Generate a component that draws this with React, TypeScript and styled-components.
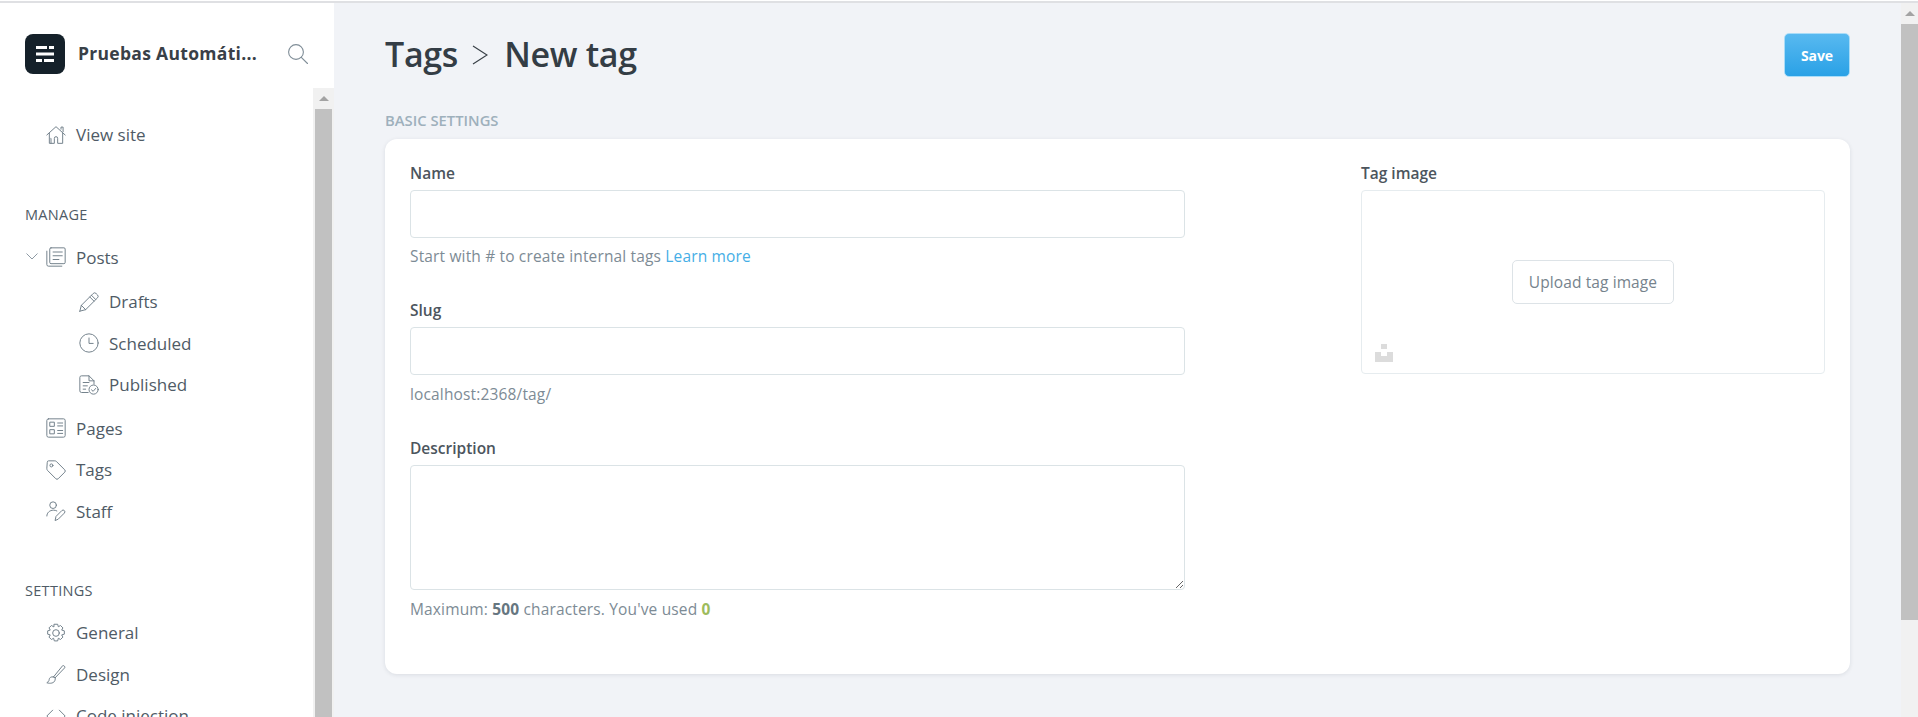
import * as React from 'react'
import styled, { createGlobalStyle } from 'styled-components'

const GlobalStyle = createGlobalStyle`
  html, body { margin: 0; padding: 0; height: 100%; overflow: hidden; }
  body { font-family: "Open Sans", "Noto Sans", sans-serif; color: #394047; }
  #root { height: 100%; }
  * { box-sizing: border-box; }
`

const Shell = styled.div`
  display: flex;
  flex-direction: column;
  height: 717px;
  background: #f1f3f7;
`

const TopLine = styled.div`
  flex: none;
  height: 3px;
  background: #fff;
  border-top: 1px solid #fff;
  border-bottom: 2px solid #dfe0e3;
`

const Body = styled.div`
  flex: 1;
  display: flex;
  min-height: 0;
`

const Sidebar = styled.aside`
  flex: none;
  width: 334px;
  display: flex;
  flex-direction: column;
  background: #fff;
`

const SideHead = styled.div`
  flex: none;
  height: 85px;
  padding: 31px 26px 0 25px;
  display: flex;
  align-items: flex-start;
`

const Logo = styled.div`
  flex: none;
  width: 40px;
  height: 40px;
  border-radius: 8px;
  background: #15212a;
  display: flex;
  align-items: center;
  justify-content: center;
`

const Brand = styled.div`
  margin-left: 13px;
  width: 210px;
  height: 38px;
  line-height: 38px;
  font-size: 17.5px;
  font-weight: 700;
  letter-spacing: 0.3px;
  color: #394047;
  white-space: nowrap;
`

const SearchWrap = styled.div`
  margin: 10px 0 0 0;
  display: flex;
`

const SideBody = styled.div`
  flex: 1;
  min-height: 0;
  display: flex;
`

const Nav = styled.nav`
  flex: 1;
  min-width: 0;
  overflow: hidden;
  padding: 26px 0 0 25px;
`

const NavRow = styled.div<{ $sub?: boolean }>`
  display: flex;
  align-items: center;
  height: 41.5px;
  padding-left: ${p => (p.$sub ? 54 : 21)}px;
  font-size: 17px;
  color: #4f5b66;
  position: relative;
`

const SubList = styled.div`
  margin: 3px 0 2px;
`

const IconSlot = styled.span`
  flex: none;
  width: 20px;
  height: 20px;
  margin-right: 10px;
  display: flex;
  color: #6f7d88;
`

const Caret = styled.span`
  position: absolute;
  left: 1px;
  top: 16px;
  display: flex;
  color: #8e9aa4;
`

const SectionTitle = styled.div<{ $top: number; $bottom: number }>`
  margin-top: ${p => p.$top}px;
  margin-bottom: ${p => p.$bottom}px;
  height: 20px;
  line-height: 20px;
  font-size: 14.5px;
  letter-spacing: 0.3px;
  color: #4f5b66;
`

const Scrollbar = styled.div<{ $inset?: boolean }>`
  flex: none;
  width: ${p => (p.$inset ? 21 : 17)}px;
  padding: ${p => (p.$inset ? '0 2px' : '0')};
  display: flex;
  flex-direction: column;
  background: #f1f1f1;
`

const ScrollUp = styled.div`
  flex: none;
  height: 21px;
  display: flex;
  align-items: center;
  justify-content: center;
  &::before {
    content: '';
    border-left: 5px solid transparent;
    border-right: 5px solid transparent;
    border-bottom: 5px solid #a3a3a3;
  }
`

const ScrollThumb = styled.div<{ $h?: number }>`
  flex: ${p => (p.$h ? 'none' : '1')};
  height: ${p => (p.$h ? `${p.$h}px` : 'auto')};
  background: #c1c1c1;
`

const Main = styled.main`
  flex: 1;
  min-width: 0;
  padding: 30px 51px 0 51px;
  background: #f1f3f7;
`

const HeaderRow = styled.div`
  display: flex;
  justify-content: space-between;
  align-items: flex-start;
  height: 75px;
`

const Title = styled.h1`
  margin: 0;
  display: flex;
  align-items: center;
  height: 42px;
  font-size: 34px;
  font-weight: 600;
  letter-spacing: -0.3px;
  color: #343d45;
`

const Crumb = styled.span`
  display: flex;
  margin: 2px 16px 0 14px;
  color: #394047;
`

const SaveButton = styled.button`
  width: 66px;
  height: 44px;
  border: 1px solid #a9dcf8;
  border-radius: 5px;
  background: linear-gradient(#58b9f0, #2aa1e6);
  color: #fff;
  font: 700 14px "Open Sans", "Noto Sans", sans-serif;
  letter-spacing: -0.1px;
  padding: 0;
`

const SectionLabel = styled.div`
  height: 31px;
  line-height: 25px;
  font-size: 14.8px;
  font-weight: 600;
  color: #9eb0bc;
`

const Card = styled.section`
  height: 535px;
  padding: 24px 25px 0;
  display: flex;
  justify-content: space-between;
  background: #fff;
  border-radius: 12px;
  box-shadow: 0 1px 4px rgba(20, 30, 50, 0.1);
`

const FormCol = styled.div`
  width: 775px;
`

const ImageCol = styled.div`
  width: 464px;
`

const Label = styled.label`
  display: block;
  height: 27px;
  line-height: 20px;
  font-size: 15.5px;
  font-weight: 600;
  color: #4c555d;
`

const Input = styled.input`
  display: block;
  width: 100%;
  height: 48px;
  border: 1px solid #dbe3e6;
  border-radius: 4px;
  background: #fff;
  outline: none;
`

const TextArea = styled.textarea`
  display: block;
  width: 100%;
  height: 125px;
  border: 1px solid #dbe3e6;
  border-radius: 4px;
  background: #fff;
  outline: none;
  resize: vertical;
`

const Hint = styled.p<{ $top?: number; $bottom: number }>`
  margin: ${p => p.$top ?? 8}px 0 ${p => p.$bottom}px;
  height: 20px;
  line-height: 20px;
  font-size: 15.5px;
  letter-spacing: 0.15px;
  color: #7d8b95;
`

const Link = styled.a`
  color: #45aee6;
`

const Strong = styled.b`
  font-weight: 700;
  color: #667680;
`

const Count = styled.b`
  font-weight: 700;
  color: #9dbb5d;
`

const ImageBox = styled.div`
  position: relative;
  height: 184px;
  border: 1px solid #e6ecef;
  border-radius: 4px;
  display: flex;
  align-items: center;
  justify-content: center;
`

const UploadButton = styled.button`
  width: 162px;
  height: 44px;
  border: 1px solid #dde3e7;
  border-radius: 5px;
  background: #fff;
  color: #76838d;
  font: 400 15.5px "Open Sans", "Noto Sans", sans-serif;
  letter-spacing: 0.1px;
  padding: 0;
`

const Unsplash = styled.span`
  position: absolute;
  left: 13px;
  bottom: 11px;
  display: flex;
`

const Stroke: React.FC<{ size?: number; children: React.ReactNode }> = ({ size = 20, children }) => (
  <svg width={size} height={size} viewBox="0 0 24 24" fill="none" stroke="currentColor" strokeWidth="1.15" strokeLinecap="round" strokeLinejoin="round">
    {children}
  </svg>
)

const icons: Record<string, React.ReactNode> = {
  home: <path d="M1 12 12 2l11 10M4 10v12h6v-6a2 2 0 0 1 4 0v6h6V10M6 22v-6a2 2 0 0 1 0 0M18 5V2.500h2.500V8" />,
  posts: <><rect x="4.500" y="1" width="18.500" height="19" rx="1.500" /><path d="M1 5v16a2 2 0 0 0 2 2h16M8.500 6h11M8.500 10.500h11M8.500 15h7" /></>,
  pen: <path d="M1 23l1.800-7L17 1.800a2.500 2.500 0 0 1 3.500 0l1.700 1.700a2.500 2.500 0 0 1 0 3.500L8 21.200 1 23zM2.800 16 8 21.200M15 4l5 5M13 6l5 5" />,
  clock: <><circle cx="12" cy="12" r="11" /><path d="M12 6v6.500h5" /></>,
  published: <><path d="M11 21H3a2 2 0 0 1-2-2V3a2 2 0 0 1 2-2h9l6 6v4M12 1v6h6M5 9h7M5 13h5M5 17h3" /><circle cx="17.500" cy="17.500" r="5.500" /><path d="m15 17.800 2 1.800 3-3.500" /></>,
  pages: <><rect x="1" y="1" width="22" height="22" rx="2" /><path d="M5 5h5v5H5zM5 14h5v5H5zM14 6h6M14 9.500h6M14 15h6M14 18.500h6" /></>,
  tags: <><path d="M1.500 2.500A1.500 1.500 0 0 1 3 1h7.500c.8 0 1.500.3 2 .8l10 10a2 2 0 0 1 0 2.800l-7.900 7.900a2 2 0 0 1-2.800 0l-10-10a3 3 0 0 1-.8-2z" /><circle cx="6.500" cy="6.500" r="1.800" /></>,
  staff: <><circle cx="8.500" cy="5" r="4" /><path d="M1 18c0-4 3.500-7 8-7 1.500 0 2.800.3 4 .9M11 23l1-4.500 7-7a2 2 0 0 1 3 3l-7 7z" /></>,
  general: <><circle cx="12" cy="12" r="4" /><path d="M10 1.500h4l.8 3 2.600-1.500 2.900 2.900-1.500 2.600 3.200.9v4l-3.200.9 1.500 2.600-2.900 2.900-2.600-1.500-.8 3.200h-4l-.9-3.200-2.600 1.500-2.900-2.900 1.500-2.600-3.100-.9v-4l3.100-.9L3.600 5.900 6.500 3l2.600 1.500z" /></>,
  design: <path d="M9 15.500 20 2a2 2 0 0 1 2.500 2.500L11 16.500M9 15.500c-3-.8-5 1-5.200 3.200-.1 1.600-1 2.600-2.800 3.800 4 1.300 8.800.6 9.800-3 .3-1.200.5-2 .2-3M9 15.500l2 1" />,
  code: <path d="M8 5 1 12l7 7M16 5l7 7-7 7" />,
}

const NavItem: React.FC<{ icon: string; label: string; sub?: boolean; caret?: boolean }> = ({ icon, label, sub, caret }) => (
  <NavRow $sub={sub}>
    {caret && (
      <Caret>
        <svg width="12" height="7" viewBox="0 0 12 7" fill="none" stroke="currentColor" strokeWidth="1">
          <path d="m.5.5 5.500 5.500L11.500.5" />
        </svg>
      </Caret>
    )}
    <IconSlot><Stroke>{icons[icon]}</Stroke></IconSlot>
    {label}
  </NavRow>
)

export default function App() {
  return (
    <Shell>
      <GlobalStyle />
      <TopLine />
      <Body>
        <Sidebar>
          <SideHead>
            <Logo>
              <svg width="20" height="18" viewBox="0 0 20 18" fill="#fff">
                <rect x="1" y="1" width="11" height="3" />
                <rect x="14" y="1" width="5" height="3" />
                <rect x="1" y="7.500" width="18" height="3" />
                <rect x="1" y="14" width="6" height="3" />
                <rect x="9" y="14" width="10" height="3" />
              </svg>
            </Logo>
            <Brand>Pruebas Automáti...</Brand>
            <SearchWrap>
              <svg width="20" height="20" viewBox="0 0 20 20" fill="none" stroke="#7f8d97" strokeWidth="1.1" strokeLinecap="round">
                <circle cx="8" cy="8" r="7.400" />
                <path d="m13.300 13.300 6.200 6.200" />
              </svg>
            </SearchWrap>
          </SideHead>
          <SideBody>
            <Nav>
              <NavItem icon="home" label="View site" />
              <SectionTitle $top={49} $bottom={12}>MANAGE</SectionTitle>
              <NavItem icon="posts" label="Posts" caret />
              <SubList>
                <NavItem icon="pen" label="Drafts" sub />
                <NavItem icon="clock" label="Scheduled" sub />
                <NavItem icon="published" label="Published" sub />
              </SubList>
              <NavItem icon="pages" label="Pages" />
              <NavItem icon="tags" label="Tags" />
              <NavItem icon="staff" label="Staff" />
              <SectionTitle $top={49} $bottom={11}>SETTINGS</SectionTitle>
              <NavItem icon="general" label="General" />
              <NavItem icon="design" label="Design" />
              <NavItem icon="code" label="Code injection" />
            </Nav>
            <Scrollbar $inset>
              <ScrollUp />
              <ScrollThumb />
            </Scrollbar>
          </SideBody>
        </Sidebar>
        <Main>
          <HeaderRow>
            <Title>
              Tags
              <Crumb>
                <svg width="16" height="22" viewBox="0 0 16 22" fill="none" stroke="currentColor" strokeWidth="1.200">
                  <path d="m1 2 14 9-14 9" />
                </svg>
              </Crumb>
              New tag
            </Title>
            <SaveButton>Save</SaveButton>
          </HeaderRow>
          <SectionLabel>BASIC SETTINGS</SectionLabel>
          <Card>
            <FormCol>
              <Label>Name</Label>
              <Input />
              <Hint $bottom={34}>Start with # to create internal tags <Link>Learn more</Link></Hint>
              <Label>Slug</Label>
              <Input />
              <Hint $top={9} $bottom={34}>localhost:2368/tag/</Hint>
              <Label>Description</Label>
              <TextArea />
              <Hint $top={9} $bottom={0}>Maximum: <Strong>500</Strong> characters. You've used <Count>0</Count></Hint>
            </FormCol>
            <ImageCol>
              <Label>Tag image</Label>
              <ImageBox>
                <UploadButton>Upload tag image</UploadButton>
                <Unsplash>
                  <svg width="18" height="18" viewBox="0 0 18 18" fill="#dcdcdc">
                    <rect x="6" y="0" width="6" height="5" />
                    <path d="M0 8h6v4h6V8h6v10H0z" />
                  </svg>
                </Unsplash>
              </ImageBox>
            </ImageCol>
          </Card>
        </Main>
        <Scrollbar>
          <ScrollUp />
          <ScrollThumb $h={596} />
        </Scrollbar>
      </Body>
    </Shell>
  )
}
